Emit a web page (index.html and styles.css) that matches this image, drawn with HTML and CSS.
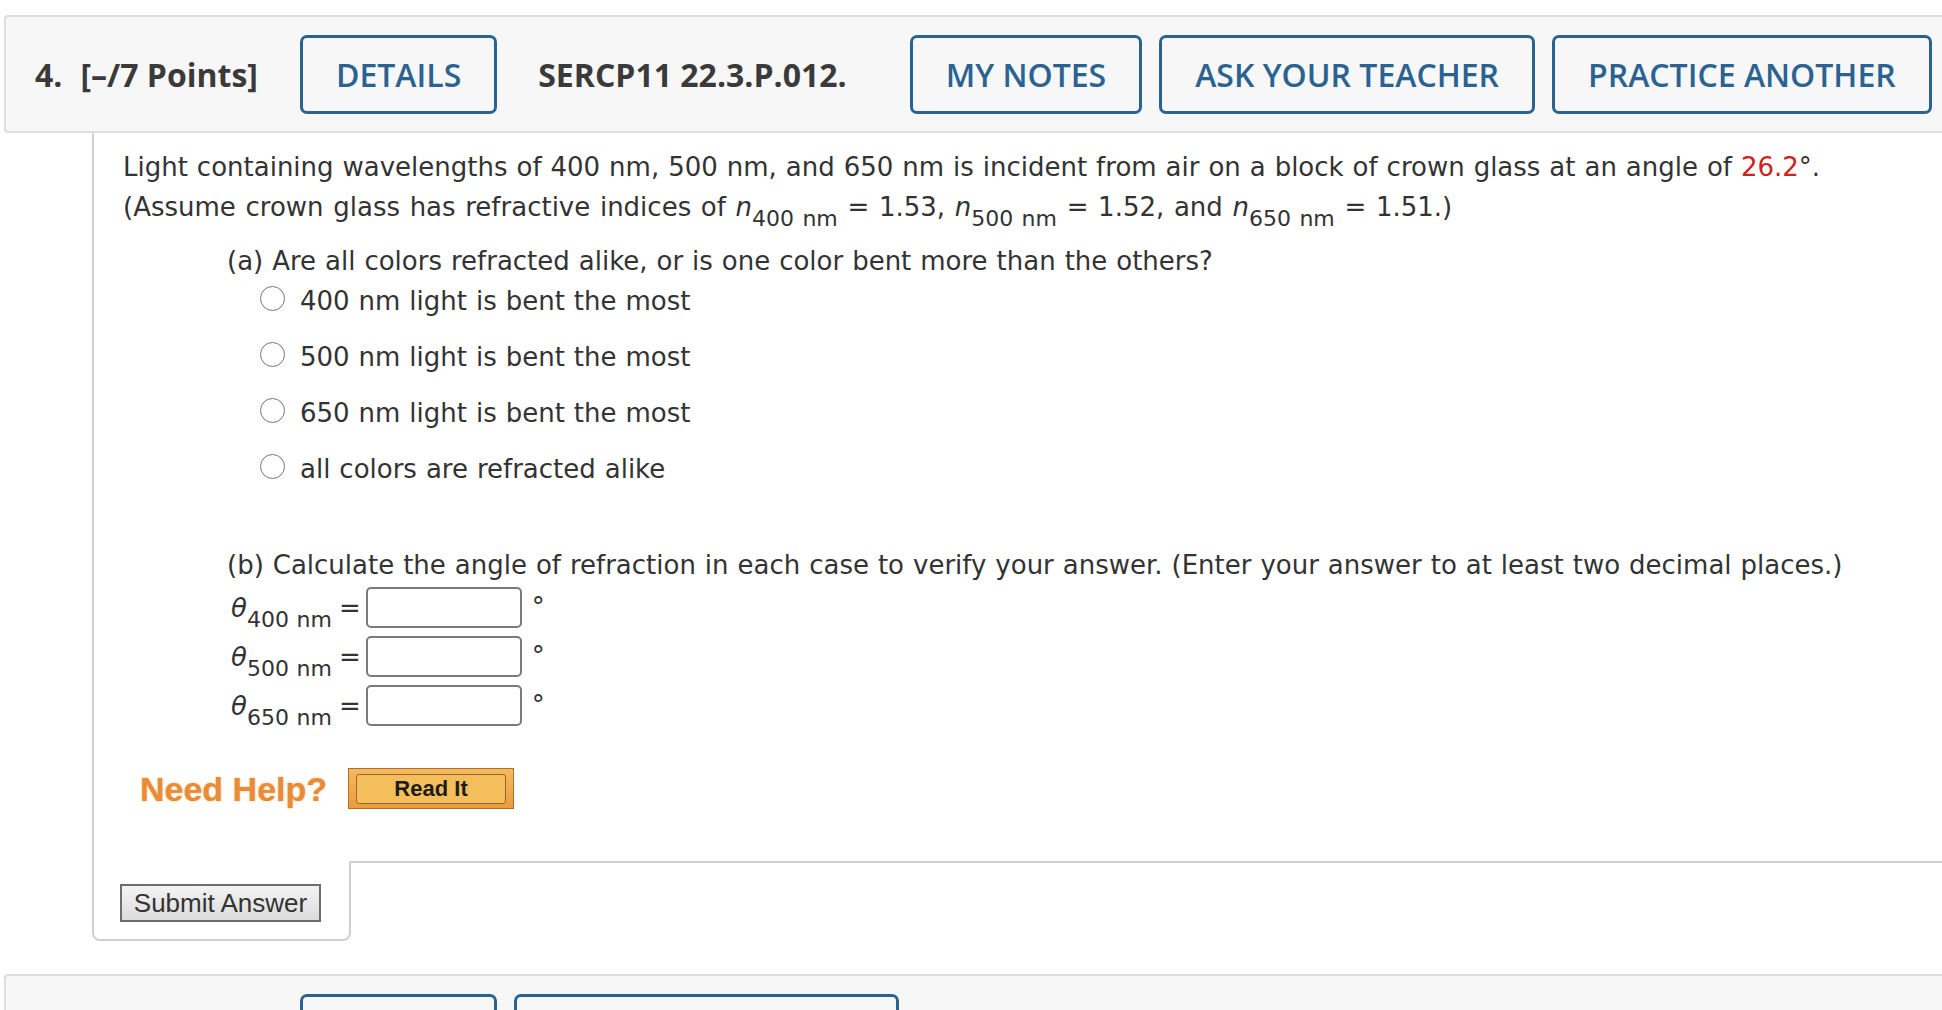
FILE: index.html
```html
<!DOCTYPE html>
<html lang="en">
<head>
<meta charset="utf-8">
<title>Question 4</title>
<link rel="stylesheet" href="styles.css">
</head>
<body>
<div class="qhead">
  <span class="qnum">4.</span>
  <span class="qpts">[–/7 Points]</span>
  <span class="btn btn-details">DETAILS</span>
  <span class="qid">SERCP11 22.3.P.012.</span>
  <span class="btn">MY NOTES</span>
  <span class="btn">ASK YOUR TEACHER</span>
  <span class="btn">PRACTICE ANOTHER</span>
</div>

<div class="qbody">
  <p class="stem">Light containing wavelengths of 400 nm, 500 nm, and 650 nm is incident from air on a block of crown glass at an angle of <span class="red">26.2</span>°.<br><span class="line2">(Assume crown glass has refractive indices of <i>n</i><sub>400 nm</sub> = 1.53, <i>n</i><sub>500 nm</sub> = 1.52, and <i>n</i><sub>650 nm</sub> = 1.51.)</span></p>

  <div class="part">
    <p class="ptitle">(a) Are all colors refracted alike, or is one color bent more than the others?</p>
    <div class="opts">
      <label class="opt"><input type="radio" name="a" class="radio">400 nm light is bent the most</label>
      <label class="opt"><input type="radio" name="a" class="radio">500 nm light is bent the most</label>
      <label class="opt"><input type="radio" name="a" class="radio">650 nm light is bent the most</label>
      <label class="opt"><input type="radio" name="a" class="radio">all colors are refracted alike</label>
    </div>
  </div>

  <div class="part part-b">
    <p class="ptitle">(b) Calculate the angle of refraction in each case to verify your answer. (Enter your answer to at least two decimal places.)</p>
    <div class="ans-row"><span class="lbl"><i>θ</i><sub>400 nm</sub></span><span class="eq">=</span><input type="text" class="ans"><span class="deg">°</span></div>
    <div class="ans-row"><span class="lbl"><i>θ</i><sub>500 nm</sub></span><span class="eq">=</span><input type="text" class="ans"><span class="deg">°</span></div>
    <div class="ans-row"><span class="lbl"><i>θ</i><sub>650 nm</sub></span><span class="eq">=</span><input type="text" class="ans"><span class="deg">°</span></div>
  </div>

  <div class="help">
    <span class="need">Need Help?</span>
    <span class="readit"><span class="readit-in">Read It</span></span>
  </div>
</div>

<div class="foot">
  <div class="submit-cell"><button class="submit" type="button">Submit Answer</button></div>
  <div class="foot-fill"></div>
</div>

<div class="qhead qhead-next">
  <span class="qnum">5.</span>
  <span class="qpts">[–/1 Points]</span>
  <span class="btn btn-details btn-tight">DETAILS</span>
  <span class="btn">PREVIOUS ANSWERS</span>
</div>
</body>
</html>
```

FILE: styles.css
```css
html, body {
  overflow: hidden;
}

body {
  margin: 0;
  background: #ffffff;
  color: #333333;
  font-family: "DejaVu Sans", Verdana, sans-serif;
}

/* question header bar */
.qhead {
  margin: 15px 0 0 4px;
  height: 114px;
  border: 2px solid #dedede;
  border-right: 0;
  border-radius: 4px 0 0 4px;
  background: #f7f7f7;
  display: flex;
  align-items: center;
  padding-left: 29px;
  font-family: "Open Sans", sans-serif;
  font-size: 32px;
  color: #3a3a3a;
  white-space: nowrap;
}

.qnum {
  font-weight: 700;
  margin-right: 18px;
}

.qpts {
  font-weight: 700;
  margin-right: 42px;
}

.qid {
  font-weight: 700;
  margin-right: 63px;
}

.btn {
  box-sizing: border-box;
  height: 79px;
  display: flex;
  align-items: center;
  padding: 0 33px;
  border: 3px solid #2a6392;
  border-radius: 7px;
  color: #2a6392;
  font-weight: 600;
  margin-right: 17px;
}

.btn-details {
  margin-right: 41px;
}

.btn-tight {
  margin-right: 17px;
}

/* question body */
.qbody {
  margin-left: 92px;
  border-left: 2px solid #cfcfcf;
  padding: 14px 0 52px 29px;
  font-size: 26px;
  line-height: 40px;
  word-spacing: 0.7px;
}

.stem {
  margin: 0;
}

.line2 {
  word-spacing: 1.4px;
}

.red {
  color: #d0211c;
}

sub {
  font-size: 22px;
  line-height: 0;
  vertical-align: -10px;
}

.part {
  margin-left: 104px;
}

.ptitle {
  margin: 14px 0 0;
}

.part-b .ptitle {
  margin-top: 56px;
  margin-bottom: 2px;
}

.opts {
  margin-left: 33px;
}

.opt {
  display: flex;
  align-items: center;
  height: 40px;
  margin-bottom: 16px;
}

.opt:last-child {
  margin-bottom: 0;
}

.radio {
  appearance: none;
  -webkit-appearance: none;
  box-sizing: border-box;
  width: 25px;
  height: 25px;
  margin: 0 15px 5px 0;
  border: 1.5px solid #767676;
  border-radius: 50%;
  background: #fff;
}

.ans-row {
  display: flex;
  align-items: center;
  height: 41px;
  margin-bottom: 8px;
}

.lbl {
  padding-left: 4px;
}

.eq {
  margin: 0 5px 0 7px;
}

.ans {
  box-sizing: border-box;
  width: 156px;
  height: 41px;
  margin: 0;
  border: 2px solid #7a7a7a;
  border-radius: 5px;
  background: #fff;
}

.deg {
  align-self: flex-start;
  margin-left: 10px;
}

/* need help */
.help {
  display: flex;
  align-items: center;
  margin: 42px 0 0 17px;
}

.need {
  font-family: "Liberation Sans", Arial, sans-serif;
  font-weight: 700;
  font-size: 34px;
  color: #e88c35;
  margin-right: 21px;
  word-spacing: 0;
  text-shadow: 0 0 2px rgba(240, 160, 90, 0.8);
}

.readit {
  box-sizing: border-box;
  width: 166px;
  height: 41px;
  padding: 5px 7px 4px;
  display: flex;
  border: 1px solid #a8722f;
  background: linear-gradient(#f7b960, #ee9a3a);
}

.readit-in {
  flex: 1;
  display: flex;
  align-items: center;
  justify-content: center;
  border: 1px solid #8f6a34;
  border-radius: 3px;
  background: #f4bf5b;
  font-family: "Liberation Sans", Arial, sans-serif;
  font-weight: 700;
  font-size: 22px;
  color: #1c1c1c;
  word-spacing: 0;
}

/* footer with submit */
.foot {
  display: flex;
}

.submit-cell {
  box-sizing: border-box;
  margin-left: 92px;
  width: 259px;
  height: 80px;
  border: 2px solid #cfcfcf;
  border-top: 0;
  border-radius: 0 0 8px 8px;
  padding: 23px 0 0 26px;
}

.foot-fill {
  flex: 1;
  border-top: 2px solid #cfcfcf;
}

.submit {
  box-sizing: border-box;
  width: 201px;
  height: 38px;
  padding: 0;
  border: 2px solid #6d6d6d;
  border-radius: 0;
  background: linear-gradient(#f3f3f3, #dcdcdc);
  font-family: "Liberation Sans", Arial, sans-serif;
  font-size: 26px;
  color: #333;
}

.qhead-next {
  margin-top: 33px;
}
```
